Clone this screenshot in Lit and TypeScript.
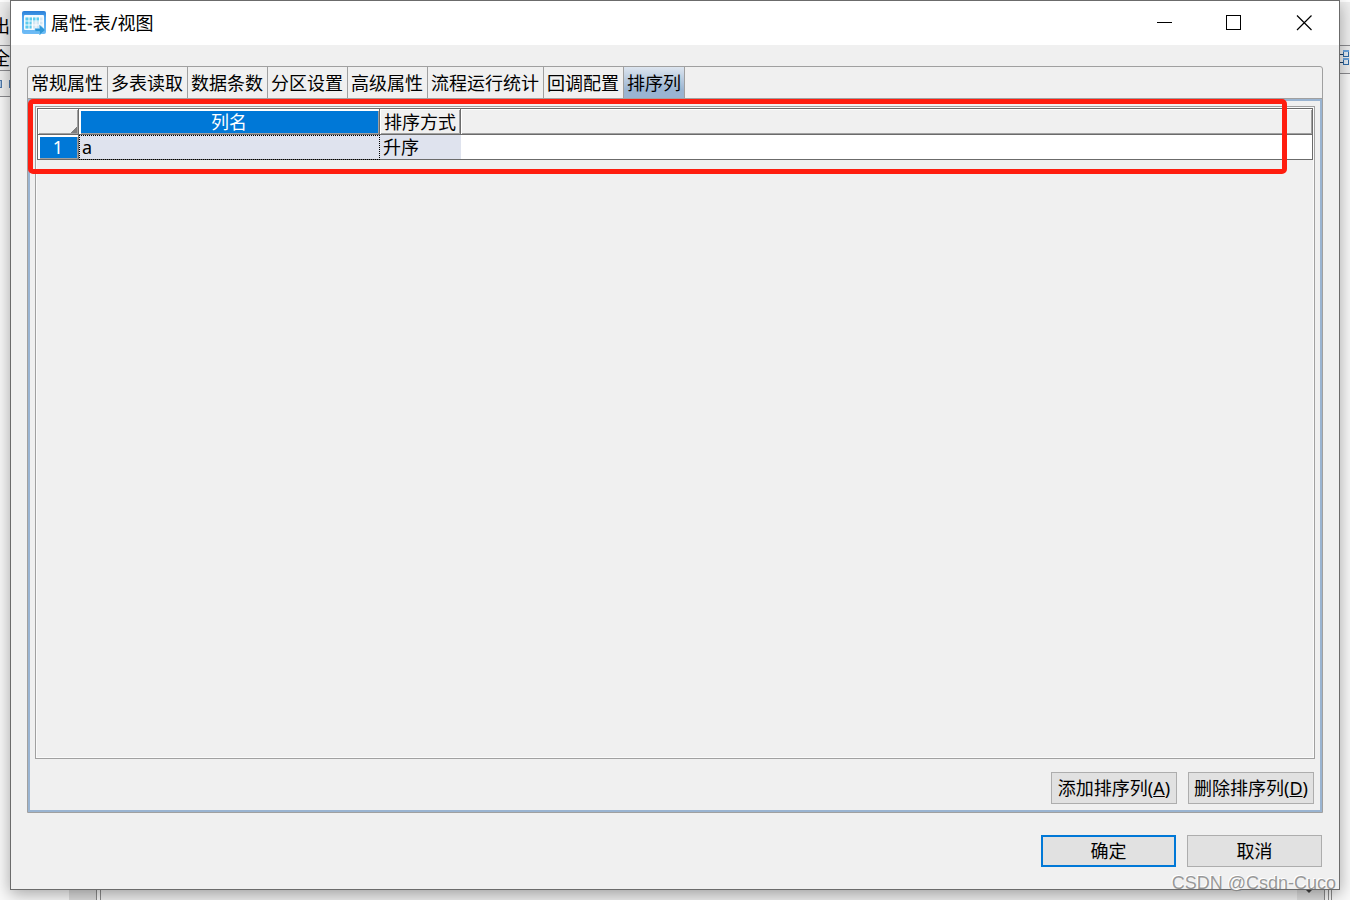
import { LitElement, html, css, svg } from "lit";
import { customElement, property, state } from "lit/decorators.js";

const appIcon = svg`
  <svg class="app-icon" viewBox="0 0 24 24" aria-hidden="true">
    <defs>
      <linearGradient id="frame" x1="0" y1="0" x2="0" y2="1">
        <stop offset="0" stop-color="#2a7fd8" />
        <stop offset="0.3" stop-color="#4fa6ee" />
        <stop offset="1" stop-color="#6fbcf6" />
      </linearGradient>
    </defs>
    <rect x="0" y="0" width="24" height="23" rx="2" fill="url(#frame)" />
    <rect x="2" y="4" width="20" height="15" rx="1" fill="#f4fafe" />
    <path d="M3.500 6.500h17v11h-17z" fill="#d3e6f2" />
    <path d="M3.500 6.500h14v4h-14zM3.500 10.500h6v7h-6z" fill="#5ccbee" />
    <path d="M3 10h18M3 14h18M7 6v12M10.500 6v12M14 6v12M17.500 6v12" stroke="#fff" stroke-width="0.9" />
    <path d="M13 17.500h4.500v-3.500l6 5-6 5v-3.500H13z" fill="#2f98d8" stroke="#7cc6f2" stroke-width="0.600" />
  </svg>`;

const treeIcon = svg`
  <svg class="tree-icon" viewBox="0 0 10 16" aria-hidden="true">
    <path d="M0 4.500h3M0 12.500h3" stroke="#1f3f66" />
    <rect x="3.500" y="1.500" width="5" height="5" fill="#e6eef7" stroke="#2f6ba8" />
    <rect x="3.500" y="9.500" width="5" height="5" fill="#e6eef7" stroke="#2f6ba8" />
    <path d="M3 1h6M3 9h6" stroke="#6ba5e0" stroke-width="2" />
  </svg>`;

@customElement("parent-window")
class ParentWindow extends LitElement {
  static styles = css`
    :host {
      display: flex;
      flex-direction: column;
      height: 100%;
      overflow: hidden;
      background: #fafafa;
      color: #000;
      font: 18px/24px "Noto Sans", "Noto Sans CJK SC", sans-serif;
    }
    .bars { display: flex; justify-content: space-between; flex: none; }
    .side { flex: 1; }
    .bar {
      box-sizing: border-box;
      display: flex;
      border-bottom: 1px solid #8c8c90;
      background: #f0f0f0;
    }
    .side.right .bar { justify-content: flex-end; }
    .menu { height: 46px; padding-top: 12px; border-top: 2px solid #fff; }
    .tools { height: 25px; }
    .side.right .tools { height: 28px; }
    .small { height: 26px; align-items: center; }
    .clipped { margin-left: -8px; }
    .tree-icon { width: 10px; height: 16px; margin-top: 4px; }
    .squares { display: flex; gap: 7px; margin-left: -1px; }
    .square { width: 1px; height: 6px; border: 1px solid #4f78a8; background: #a9c4e2; }
    .canvas { flex: 1; display: flex; justify-content: space-between; align-items: end; }
    .corner {
      width: 27px;
      height: 12px;
      background: #dedede;
      margin-left: 69px;
      border-right: 1px solid #8c8c8c;
    }
    .track { flex: 1; height: 12px; background: #f0f0f0; border-left: 1px solid #8c8c8c; margin-left: 3px; }
    .end {
      width: 27px;
      height: 12px;
      background: #dedede;
      border-right: 1px solid #8c8c8c;
    }
    .arrow { display: block; width: 8px; height: 12px; margin-left: 8px; }
    .rails { width: 2px; height: 12px; margin-left: 3px; margin-right: 18px; border: solid #8c8c8c; border-width: 0 1px; }
  `;
  render() {
    return html`
      <div class="bars">
        <div class="side">
          <div class="bar menu"><span class="clipped">出</span></div>
          <div class="bar tools"><span class="clipped">全</span></div>
          <div class="bar small">
            <div class="squares"><span class="square"></span><span class="square"></span></div>
          </div>
        </div>
        <div class="side right">
          <div class="bar menu"></div>
          <div class="bar tools">${treeIcon}</div>
        </div>
      </div>
      <div class="canvas">
        <div class="corner"></div>
        <div class="track"></div>
        <div class="end">
          <svg class="arrow" viewBox="0 0 8 12" aria-hidden="true"><path d="M1 2h6L4 5z" fill="#444" /></svg>
        </div>
        <div class="rails"></div>
      </div>`;
  }
}

@customElement("title-bar")
class TitleBar extends LitElement {
  @property() heading = "";
  static styles = css`
    :host {
      display: flex;
      align-items: center;
      height: 44px;
      background: #fff;
      padding-left: 11px;
    }
    .app-icon { width: 24px; height: 24px; }
    .heading { margin: 0 auto 0 5px; font-size: 18px; font-weight: 400; line-height: 24px; }
    .control {
      width: 70px;
      height: 44px;
      padding: 0;
      border: 0;
      background: none;
      display: grid;
      place-items: center;
    }
    .glyph { width: 16px; height: 16px; fill: none; stroke: #000; }
  `;
  render() {
    return html`
      ${appIcon}
      <h1 class="heading">${this.heading}</h1>
      <button class="control" aria-label="最小化"><svg class="glyph" viewBox="0 0 16 16"><path d="M1 7.500h15" /></svg></button>
      <button class="control" aria-label="最大化"><svg class="glyph" viewBox="0 0 16 16"><rect x="0.500" y="0.500" width="14" height="14" /></svg></button>
      <button class="control" aria-label="关闭"><svg class="glyph" viewBox="0 0 16 16"><path stroke-width="1.200" d="M1 0.500l14.500 14.500M15.500 0.500L1 15" /></svg></button>`;
  }
}

@customElement("sort-table")
class SortTable extends LitElement {
  @property({ attribute: false }) rows: { name: string; order: string }[] = [];
  static styles = css`
    :host { display: block; }
    .grid {
      width: 100%;
      table-layout: fixed;
      border-collapse: separate;
      border-spacing: 0;
      box-sizing: border-box;
      border: solid #6b6b6b;
      border-width: 1px 1px 0 1px;
      background: #fff;
      font-size: 18px;
      line-height: 22px;
    }
    .c-num { width: 41px; }
    .c-name { width: 301px; }
    .c-order { width: 81px; }
    th, td {
      box-sizing: border-box;
      padding: 0;
      font-weight: 400;
      border-bottom: 1px solid #6b6b6b;
      white-space: nowrap;
      overflow: hidden;
    }
    .head th, .head td {
      height: 26px;
      border-right: 1px solid #6b6b6b;
      background: #f0f0f0;
      box-shadow: inset 1px 1px #fff, inset -1px -1px #a0a0a0;
      text-align: center;
    }
    .head .filler { border-right: 0; }
    .head .selected {
      background: #0078d7;
      box-shadow: inset 2px 2px #fff, inset -1px -1px #a0a0a0;
      color: #fff;
    }
    .head .corner { background: linear-gradient(135deg, #f0f0f0 50%, #808080 50%) right bottom / 8px 8px no-repeat, #f0f0f0; }
    .row th, .row td { height: 25px; text-align: left; }
    .row .num {
      background: #0078d7;
      color: #fff;
      text-align: center;
      border-right: 1px solid #6b6b6b;
      box-shadow: inset 2px 2px #fff, inset -1px -1px #a0a0a0;
    }
    .row .cell { background: #dfe3ee; padding-left: 3px; }
    .row .focused { outline: 1px dotted #000; outline-offset: -1px; }
  `;
  render() {
    return html`
      <table class="grid">
        <colgroup><col class="c-num" /><col class="c-name" /><col class="c-order" /><col /></colgroup>
        <thead>
          <tr class="head">
            <td class="corner"></td>
            <th class="selected" scope="col">列名</th>
            <th scope="col">排序方式</th>
            <td class="filler"></td>
          </tr>
        </thead>
        <tbody>
          ${this.rows.map(
            (r, i) => html`<tr class="row">
              <th class="num" scope="row">${i + 1}</th>
              <td class="cell focused">${r.name}</td>
              <td class="cell">${r.order}</td>
              <td></td>
            </tr>`
          )}
        </tbody>
      </table>`;
  }
}

@customElement("app-root")
class AppRoot extends LitElement {
  @state() private active = 7;
  private tabs = ["常规属性", "多表读取", "数据条数", "分区设置", "高级属性", "流程运行统计", "回调配置", "排序列"];
  private rows = [{ name: "a", order: "升序" }];

  static styles = css`
    :host {
      display: block;
      position: relative;
      height: 100vh;
      overflow: hidden;
      color: #000;
      font: 18px/24px "Noto Sans", "Noto Sans CJK SC", sans-serif;
    }
    .dialog {
      position: absolute;
      inset: 0 10px 10px 10px;
      display: flex;
      flex-direction: column;
      border: 1px solid #6b6b6b;
      background: #f0f0f0;
      box-shadow: 0 4px 16px rgba(0, 0, 0, 0.35);
    }
    .body {
      flex: 1;
      min-height: 0;
      display: flex;
      flex-direction: column;
      gap: 22px;
      padding: 21px 16px 22px;
    }
    .tab-box {
      position: relative;
      flex: 1;
      min-height: 0;
      display: flex;
      flex-direction: column;
      border: 1px solid #a0a0a0;
      border-radius: 3px 3px 0 0;
    }
    .tabs { display: flex; height: 31px; border-bottom: 1px solid #a0a0a0; }
    .tab {
      padding: 0 4px 0 3px;
      border: 0;
      border-right: 1px solid #a0a0a0;
      background: none;
      font: inherit;
      color: inherit;
      white-space: nowrap;
    }
    .tab.active { padding-right: 3px; background: linear-gradient(#dde5ef, #9ab4d1 75%); }
    .panel {
      flex: 1;
      min-height: 0;
      display: flex;
      flex-direction: column;
      gap: 13px;
      border: 2px solid #9ab4d1;
      padding: 5px 5px 6px;
    }
    .viewport {
      flex: 1;
      min-height: 0;
      border: 1px solid #a0a0a0;
      box-shadow: inset 0 0 0 1px #fafafa;
      padding: 1px;
    }
    .actions, .footer { display: flex; justify-content: flex-end; gap: 11px; padding-right: 1px; }
    .btn {
      box-sizing: border-box;
      min-width: 126px;
      height: 32px;
      padding: 0 4px;
      border: 1px solid #adadad;
      background: #e1e1e1;
      font: inherit;
      color: inherit;
      white-space: nowrap;
    }
    .footer .btn { min-width: 135px; }
    .btn.primary { border: 2px solid #0078d7; }
    .highlight {
      position: absolute;
      top: 32px;
      left: 0;
      right: 35px;
      height: 65px;
      border: 5px solid #ff1d0f;
      border-radius: 5px;
      pointer-events: none;
    }
    .watermark {
      position: absolute;
      right: 14px;
      bottom: 5px;
      font: 18px/24px "Liberation Sans", sans-serif;
      color: rgba(120, 120, 120, 0.75);
      text-shadow: -1px -1px #fff;
      pointer-events: none;
    }
  `;

  render() {
    return html`
      <parent-window></parent-window>
      <section class="dialog" role="dialog" aria-label="属性-表/视图">
        <title-bar heading="属性-表/视图"></title-bar>
        <div class="body">
          <div class="tab-box">
            <div class="tabs" role="tablist">
              ${this.tabs.map(
                (t, i) => html`<button
                  class="tab ${i === this.active ? "active" : ""}"
                  role="tab"
                  aria-selected=${i === this.active}
                  @click=${() => (this.active = i)}
                >${t}</button>`
              )}
            </div>
            <div class="panel" role="tabpanel">
              <div class="viewport"><sort-table .rows=${this.rows}></sort-table></div>
              <div class="actions">
                <button class="btn">添加排序列(<u>A</u>)</button>
                <button class="btn">删除排序列(<u>D</u>)</button>
              </div>
            </div>
            <div class="highlight"></div>
          </div>
          <div class="footer">
            <button class="btn primary">确定</button>
            <button class="btn">取消</button>
          </div>
        </div>
      </section>
      <div class="watermark">CSDN @Csdn-Cuco</div>`;
  }
}
